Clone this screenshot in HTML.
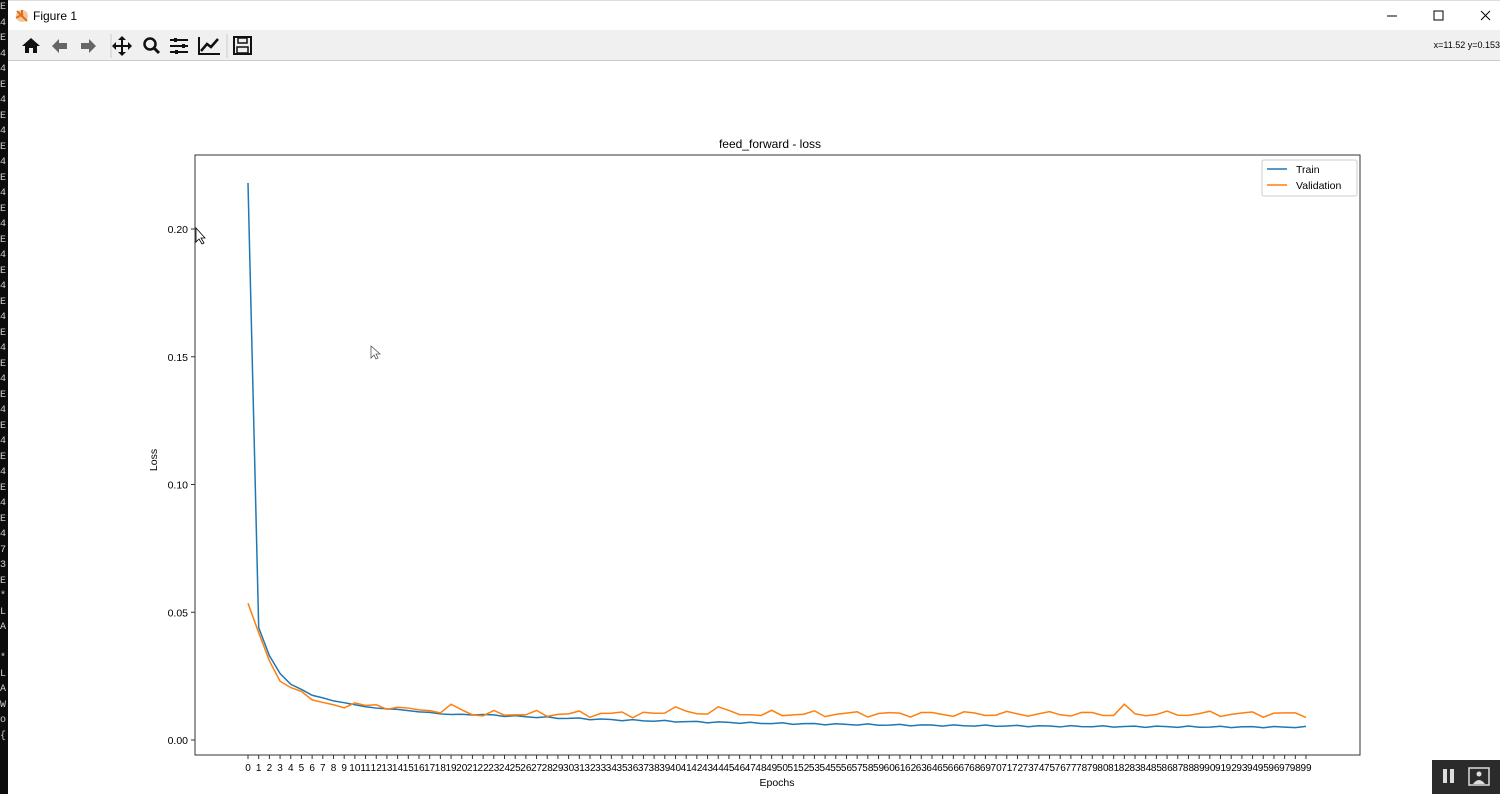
<!DOCTYPE html>
<html><head><meta charset="utf-8"><style>
body{margin:0;width:1500px;height:794px;overflow:hidden;background:#fff;font-family:"Liberation Sans","DejaVu Sans",sans-serif;position:relative}
#strip{position:absolute;left:0;top:0;width:8px;height:794px;background:#0c0c0c;color:#ccc;font:10px "Liberation Mono",monospace;line-height:15.5px;overflow:hidden}
#title{position:absolute;left:8px;top:0;right:0;height:30px;background:#fff;border-top:1px solid #ddd}
#title span{position:absolute;left:25px;top:8px;font-size:12px;color:#000}
#tb{position:absolute;left:8px;top:30px;right:0;height:30px;background:#f0f0f0;border-bottom:1px solid #ccc}
#coord{position:absolute;right:0;top:40px;font-size:9px;color:#000}
#bb{position:absolute;left:1432px;top:760px;width:68px;height:34px;background:#2b2b2b}
</style></head><body>
<div id="strip">E<br>4<br>E<br>4<br>4<br>E<br>4<br>E<br>4<br>E<br>4<br>E<br>4<br>E<br>4<br>E<br>4<br>E<br>4<br>E<br>4<br>E<br>4<br>E<br>4<br>E<br>4<br>E<br>4<br>E<br>4<br>E<br>4<br>E<br>4<br>7<br>3<br>E<br>*<br>L<br>A<br><br>*<br>L<br>A<br>W<br>o<br>{</div>
<div id="title"><svg style="position:absolute;left:6px;top:7px" width="16" height="16" viewBox="0 0 16 16"><circle cx="8" cy="8" r="6" fill="#f3c89a"/><path d="M3 3L13 13M8 2L8 9M2 10L9 6" stroke="#e07020" stroke-width="2"/></svg><span>Figure 1</span>
<svg style="position:absolute;right:0;top:0" width="120" height="30"><path d="M7 15h10" stroke="#000"/><rect x="54" y="10" width="9" height="9" fill="none" stroke="#000"/><path d="M101 10l9 9M110 10l-9 9" stroke="#000"/></svg></div>
<div id="tb"><svg width="260" height="30">
<path d="M14 16l9-8 9 8h-3v7h-4v-5h-4v5h-4v-7z" fill="#111"/>
<path d="M44 16l7-7v4h8v6h-8v4z" fill="#666"/>
<path d="M88 16l-7-7v4h-8v6h8v4z" fill="#666"/>
<path d="M114 6l4 4h-3v5h5v-3l4 4-4 4v-3h-5v5h3l-4 4-4-4h3v-5h-5v3l-4-4 4-4v3h5v-5h-3z" fill="#111"/>
<circle cx="142" cy="14" r="5.5" fill="none" stroke="#111" stroke-width="2.5"/><path d="M146 18l5 5" stroke="#111" stroke-width="3"/>
<path d="M162 10h18M162 16h18M162 22h18" stroke="#111" stroke-width="2"/><rect x="166" y="8" width="3" height="4" fill="#111"/><rect x="174" y="14" width="3" height="4" fill="#111"/><rect x="167" y="20" width="3" height="4" fill="#111"/>
<path d="M191 7v17h21" stroke="#111" stroke-width="2" fill="none"/><path d="M193 21l6-7 4 3 7-8" stroke="#111" stroke-width="2.5" fill="none"/>
<rect x="226" y="7" width="17" height="17" fill="none" stroke="#111" stroke-width="2"/><rect x="230" y="8" width="9" height="5" fill="none" stroke="#111" stroke-width="1.5"/><rect x="229" y="17" width="11" height="6" fill="none" stroke="#111" stroke-width="1.5"/>
<path d="M103 4v24M219 4v24" stroke="#ccc"/>
</svg></div>
<div id="coord">x=11.52 y=0.153</div>
<svg id="plot" style="position:absolute;left:0;top:0" width="1500" height="794" font-family="Liberation Sans, DejaVu Sans, sans-serif">
<text x="770" y="148" font-size="12" text-anchor="middle">feed_forward - loss</text>
<text transform="translate(157,460) rotate(-90)" font-size="10.5" text-anchor="middle">Loss</text>
<text x="777" y="786" font-size="10.5" text-anchor="middle">Epochs</text>
<g id="ticks"></g>
<g transform="translate(248,740) scale(10.687,-2555)">
<polyline id="tr" fill="none" stroke="#1f77b4" stroke-width="1.5" vector-effect="non-scaling-stroke"/>
<polyline id="va" fill="none" stroke="#ff7f0e" stroke-width="1.5" vector-effect="non-scaling-stroke"/>
</g>
<rect x="195" y="155" width="1165" height="600" fill="none" stroke="#333" stroke-width="1"/>
<rect x="1262" y="160" width="95" height="36" fill="#fff" fill-opacity="0.8" stroke="#ccc" rx="2"/>
<path d="M1267 169h20" stroke="#1f77b4" stroke-width="1.5"/><text x="1296" y="173" font-size="10.5">Train</text>
<path d="M1267 185h20" stroke="#ff7f0e" stroke-width="1.5"/><text x="1296" y="189" font-size="10.5">Validation</text>
<path d="M196 228l0 14 3-3 3 5 2-1-3-5h4z" fill="#fff" stroke="#000" stroke-width="0.8"/>
<path d="M371 346l0 12 3-3 2 4 2-1-2-4h4z" fill="#fff" stroke="#555" stroke-width="0.8"/>
</svg>
<div id="bb"><svg width="68" height="34"><rect x="11" y="9" width="4" height="14" fill="#ddd"/><rect x="18" y="9" width="4" height="14" fill="#ddd"/><rect x="37" y="8" width="20" height="17" fill="none" stroke="#ddd" stroke-width="1.5"/><circle cx="47" cy="14" r="2.5" fill="#ddd"/><path d="M41 24q6-8 12 0" fill="#ddd"/></svg></div>
<script>
var t=[0.218,0.044,0.033,0.026,0.0218,0.0198,0.0175,0.0165,0.0153,0.0146,0.0138,0.013,0.0125,0.0122,0.012,0.0115,0.011,0.0108,0.0102,0.01,0.0101];
for(var i=21;i<100;i++)t.push(0.0048+0.0055*Math.exp(-(i-20)/25)+0.0003*Math.sin(i*2.3));
var v=[0.0535,0.042,0.031,0.023,0.0205,0.019,0.0157,0.0147,0.0138,0.0126,0.0145,0.0135,0.0138,0.012,0.0128,0.0125,0.0118,0.0115,0.0106,0.014,0.0118];
for(var i=21;i<100;i++){var x=0.0102+0.0009*Math.sin(i*1.7)+0.0006*Math.sin(i*3.1);if(i==40||i==44)x=0.013;if(i==82)x=0.014;if(i==19)x=0.014;v.push(x);}
function pts(a){return a.map(function(y,i){return i+','+y}).join(' ')}
document.getElementById('tr').setAttribute('points',pts(t));
document.getElementById('va').setAttribute('points',pts(v));
var g='';
for(var i=0;i<100;i++){var x=248+i*10.687;g+='<path d="M'+x+' 755v4" stroke="#333"/><text x="'+x+'" y="771" font-size="10" text-anchor="middle">'+i+'</text>';}
for(var k=0;k<5;k++){var y=740-k*127.75;g+='<path d="M191 '+y+'h4" stroke="#333"/><text x="188" y="'+(y+4)+'" font-size="10.5" text-anchor="end">'+(k*0.05).toFixed(2)+'</text>';}
document.getElementById('ticks').innerHTML=g;
</script>
</body></html>
